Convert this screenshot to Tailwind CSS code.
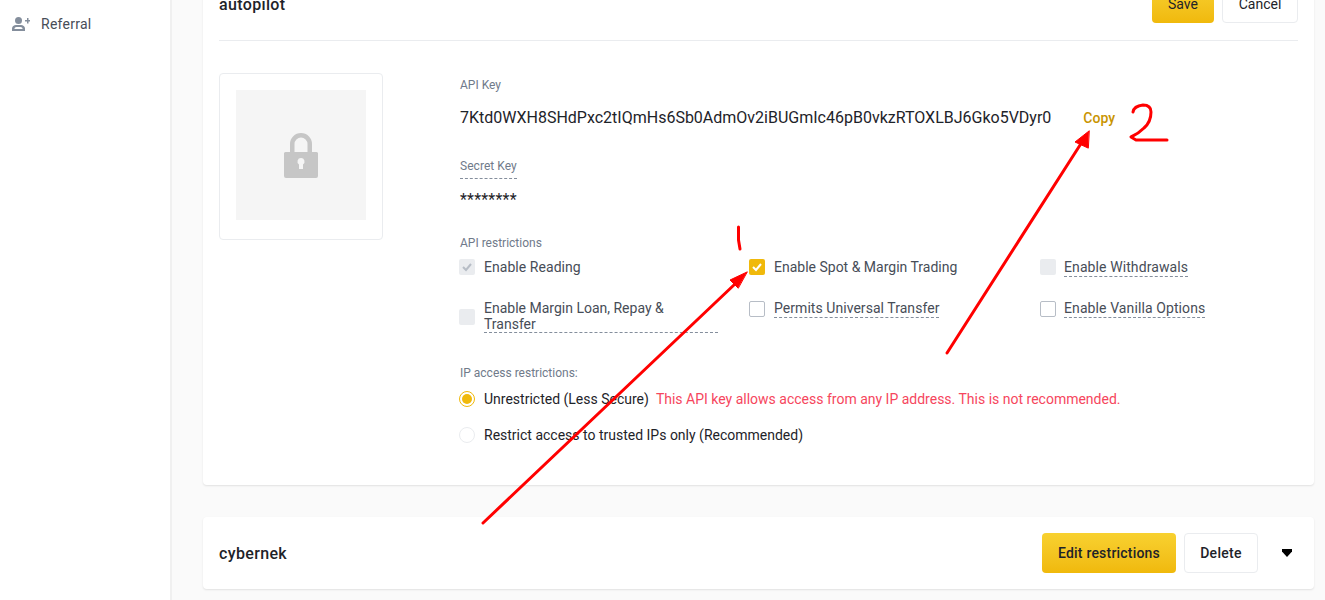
<!DOCTYPE html>
<html><head><meta charset="utf-8"><script src="https://cdn.jsdelivr.net/npm/@tailwindcss/browser@4"></script></head>
<body class="m-0 bg-white">
<div class="relative flex h-[600px] w-[1325px] overflow-hidden font-['Roboto',sans-serif] text-[14px] leading-[20px] text-[#1e2329]">
  <aside class="w-[172px] shrink-0 border-r-2 border-[#f0f0f0] bg-white">
    <div class="flex h-[48px] items-center pl-[12px] text-[#474d57]">
      <svg class="w-[18px] h-[14px]" viewBox="0 0 18 14" fill="#848e9c"><circle cx="6.5" cy="3.500" r="3.500"/><path d="M0 14v-2.500C0 9.500 2 8 4 8h5c2 0 4 1.500 4 3.500V14zM2.500 12h8v-.5c0-.6-.8-1.500-2-1.500H4.500c-1.200 0-2 .9-2 1.500z" fill-rule="evenodd"/><path d="M13 3h2V1h1.500v2H18v1.500h-1.500v2H15v-2h-2z"/></svg>
      <span class="ml-[11px] tracking-[0.25px] text-[#474d57]">Referral</span>
    </div>
  </aside>
  <main class="flex-1 bg-[#fafafa] pl-[31px] pr-[11px]">
    <section class="-mt-[33px] h-[518px] rounded-[4px] bg-white px-[16px] pt-[16px] shadow-[0_1px_2px_rgba(0,0,0,0.1)]">
      <div class="flex h-[58px] items-start justify-between border-b border-[#eaecef]">
        <h2 class="pt-[12px] text-[16px] font-medium leading-[20px] tracking-[0.35px] text-[#1e2329]">autopilot</h2>
        <div class="flex gap-[8px]">
          <button class="h-[40px] w-[62px] rounded-[4px] bg-gradient-to-b from-[#f8d12f] to-[#f0b90b] pt-[1px] text-[#1e2329]">Save</button>
          <button class="h-[40px] w-[76px] rounded-[4px] border border-[#eaecef] bg-white pt-[1px] text-[#1e2329]">Cancel</button>
        </div>
      </div>
      <div class="flex pt-[32px]">
        <div class="h-[167px] w-[164px] shrink-0 rounded-[4px] border border-[#eaecef] pl-[16px] pt-[16px]">
          <div class="flex h-[130px] w-[130px] items-center justify-center bg-[#f5f5f5]">
            <svg class="w-[34px] h-[45px]" viewBox="0 0 34 45" fill="#c6c6c6"><path fill-rule="evenodd" d="M6 19v-8a11 11 0 0 1 22 0v8h4a2 2 0 0 1 2 1v23a2 2 0 0 1-2 2H2a2 2 0 0 1-2-2V20a2 2 0 0 1 2-1zm4.500 0h13v-8a6.500 6.500 0 0 0-13 0zM17 25a3.500 3.500 0 0 0-2 6.400V36h4v-4.600A3.500 3.500 0 0 0 17 25z"/></svg>
          </div>
        </div>
        <div class="ml-[77px] flex-1">
          <div class="pt-[4px] text-[12px] leading-[16px] text-[#707a8a]">API Key</div>
          <div class="mt-[15px] flex h-[20px] items-center">
            <span class="text-[16px]">7Ktd0WXH8SHdPxc2tIQmHs6Sb0AdmOv2iBUGmIc46pB0vkzRTOXLBJ6Gko5VDyr0</span>
            <span class="ml-[32px] font-medium text-[#c99400]">Copy</span>
          </div>
          <div class="mt-[30px] w-fit border-b border-dashed border-[#848e9c] pb-[4px] text-[12px] leading-[16px] tracking-[0.05px] text-[#707a8a]">Secret Key</div>
          <div class="mt-[8px] h-[20px] pt-[3px] text-[16px] tracking-[0.2px]">********</div>
          <div class="mt-[28px] text-[12px] leading-[16px] text-[#707a8a]">API restrictions</div>
          <div class="-ml-[1px] mt-[6px] grid grid-cols-[290px_291px_1fr] items-start gap-y-[23px] text-[#474d57]">
            <label class="flex h-[20px] items-center">
              <span class="flex h-[16px] w-[16px] items-center justify-center rounded-[2px] bg-[#eaecef]"><svg class="w-[10px] h-[10px]" viewBox="0 0 10 10" fill="none" stroke="#b7bdc6" stroke-width="2"><path d="M1 5l3 3 5-6"/></svg></span>
              <span class="ml-[9px] tracking-[0.05px]">Enable Reading</span>
            </label>
            <label class="flex h-[20px] items-center">
              <span class="flex h-[16px] w-[16px] items-center justify-center rounded-[2px] bg-[#f0b90b]"><svg class="w-[10px] h-[10px]" viewBox="0 0 10 10" fill="none" stroke="#fff" stroke-width="2"><path d="M1 5l3 3 5-6"/></svg></span>
              <span class="ml-[9px]">Enable Spot &amp; Margin Trading</span>
            </label>
            <label class="flex h-[20px] items-center">
              <span class="h-[16px] w-[16px] rounded-[2px] bg-[#eaecef]"></span>
              <span class="ml-[8px] mt-[2px] border-b border-dashed border-[#848e9c] leading-[17px] tracking-[0.1px]">Enable Withdrawals</span>
            </label>
            <label class="flex items-center">
              <span class="h-[16px] w-[16px] rounded-[2px] bg-[#eaecef]"></span>
              <span class="ml-[9px] w-[234px] border-b border-dashed border-[#848e9c] leading-[16px]">Enable Margin Loan, Repay &amp; Transfer</span>
            </label>
            <label class="flex h-[18px] items-center">
              <span class="h-[16px] w-[16px] rounded-[2px] border border-[#b7bdc6]"></span>
              <span class="ml-[9px] border-b border-dashed border-[#848e9c] leading-[17px] tracking-[0.05px]">Permits Universal Transfer</span>
            </label>
            <label class="flex h-[18px] items-center">
              <span class="h-[16px] w-[16px] rounded-[2px] border border-[#b7bdc6]"></span>
              <span class="ml-[8px] border-b border-dashed border-[#848e9c] leading-[17px] tracking-[0.1px]">Enable Vanilla Options</span>
            </label>
          </div>
          <div class="mt-[32px] text-[12px] leading-[16px] text-[#707a8a]">IP access restrictions:</div>
          <div class="-ml-[1px] mt-[8px] flex h-[20px] items-center">
            <span class="flex h-[16px] w-[16px] items-center justify-center rounded-full border border-[#f0b90b]"><span class="h-[10px] w-[10px] rounded-full bg-[#f0b90b]"></span></span>
            <span class="ml-[9px]">Unrestricted (Less Secure)</span>
            <span class="ml-[7px] text-[#f6465d]">This API key allows access from any IP address. This is not recommended.</span>
          </div>
          <div class="-ml-[1px] mt-[16px] flex h-[20px] items-center">
            <span class="h-[16px] w-[16px] rounded-full border border-[#eaecef]"></span>
            <span class="ml-[9px]">Restrict access to trusted IPs only (Recommended)</span>
          </div>
        </div>
      </div>
    </section>
    <section class="mt-[32px] flex h-[72px] items-center justify-between rounded-[4px] bg-white px-[16px] shadow-[0_1px_2px_rgba(0,0,0,0.1)]">
      <h2 class="pt-[1px] text-[16px] font-medium tracking-[0.35px] text-[#1e2329]">cybernek</h2>
      <div class="flex items-center">
        <button class="h-[40px] w-[134px] rounded-[4px] bg-gradient-to-b from-[#f8d12f] to-[#f0b90b] font-medium tracking-[0.2px] text-[#1e2329]">Edit restrictions</button>
        <button class="ml-[8px] h-[40px] w-[74px] rounded-[4px] border border-[#eaecef] bg-white font-medium tracking-[0.3px] text-[#1e2329]">Delete</button>
        <svg class="ml-[24px] mr-[6px] w-[10px] h-[8px]" viewBox="0 0 10 8" fill="#000"><path d="M0 0h10v2.500L5 8 0 2.500z"/></svg>
      </div>
    </section>
  </main>
  <svg class="pointer-events-none absolute left-0 top-0 h-[600px] w-[1325px]" viewBox="0 0 1325 600" fill="none" stroke="#ff0000" stroke-width="3" stroke-linecap="round" stroke-linejoin="round">
    <path d="M483 523L735 284"/>
    <path d="M947 353L1082 142"/>
    <path d="M738.500 227L738.500 240L740 249"/>
    <path d="M1133 112Q1134 106 1143 105Q1151 105 1151 112Q1151 122 1144 128Q1138 134 1131 137L1136 140L1167 140"/>
    <polygon points="747,272 730,280 738,288" fill="#ff0000" stroke-width="1"/>
    <polygon points="1089,131 1075,142 1088,148" fill="#ff0000" stroke-width="1"/>
  </svg>
</div>
</body></html>
